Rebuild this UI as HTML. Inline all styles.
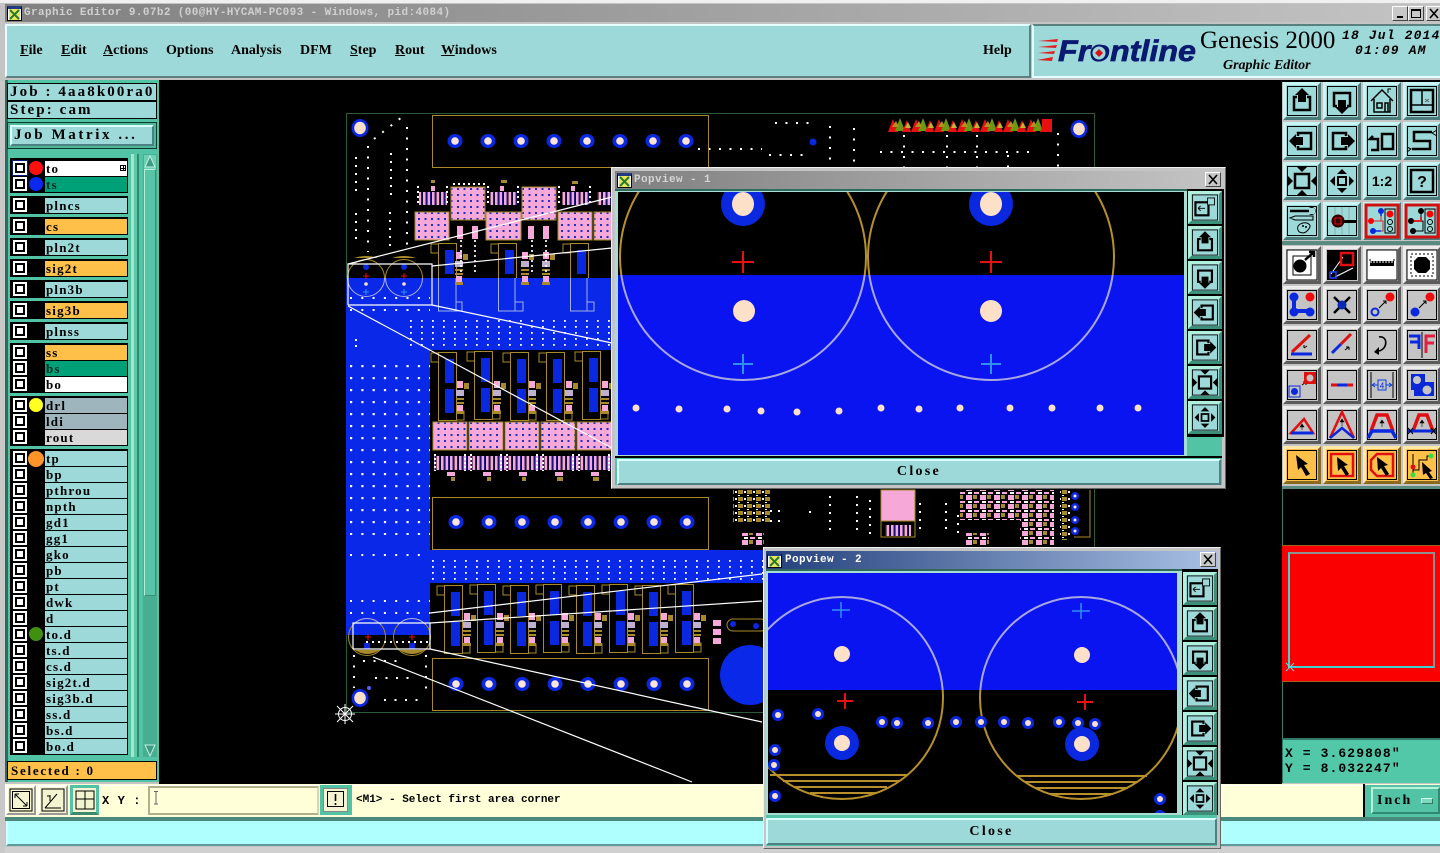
<!DOCTYPE html>
<html><head><meta charset="utf-8"><title>Graphic Editor</title>
<style>
html,body{margin:0;padding:0;background:#000;}
body{position:relative;width:1440px;height:853px;overflow:hidden;font-family:"Liberation Mono",monospace;color:#000}
div{position:absolute;box-sizing:border-box}
svg{position:absolute;display:block}
.mn{font:bold 14px/16px "Liberation Serif",serif;top:43px;white-space:nowrap}
.bk{background:#000;left:10px;width:118px}
.c{left:13px;width:14px;height:14px;background:#fff}
.c:before{content:"";position:absolute;left:2px;top:2px;width:10px;height:10px;background:#000}
.c:after{content:"";position:absolute;left:4px;top:4px;width:6px;height:6px;background:#fff}
.l{left:45px;width:82px;height:15px;font:bold 13px/15px "Liberation Serif",serif;letter-spacing:1.2px;padding-left:1px;background:#9ed9d9;white-space:pre}
.o{background:#ffc04a}.g{background:#00a078;color:#02291f}.w{background:#fff}.s{background:#9fb5bd}.y{background:#d9d9d9}
.dot{left:29px;width:14px;height:14px;border-radius:50%}
.b{width:38px;height:38px;border:3px solid;border-color:#c8f4f4 #4d7a7a #4d7a7a #c8f4f4;background:#9ed9d9}
.b svg{left:-3px;top:-3px;width:38px;height:38px}
.p svg{left:-3px;top:-3px;width:34px;height:33px}
.gy{background:#c4c4c4;border-color:#ececec #5c5c5c #5c5c5c #ececec}
.or{background:#ffc04a;border-color:#ffe8a8 #8a6a20 #8a6a20 #ffe8a8}
.p{width:34px;height:33px;border:3px solid;border-color:#b0f0dc #3a9078 #3a9078 #b0f0dc;background:#9ed9d9}
.x{width:16px;height:15px;background:#c8c8c8;border:1px solid;border-color:#fff #444 #444 #fff}
.cr{background:#f4f4d0;border:2px solid;border-color:#fff #999 #999 #fff}
.tb{background:#52c3a5;border:3px solid;border-color:#8fb0a0 #3a8a70 #3a8a70 #8fb0a0}
.cl{font:bold 14px/22px "Liberation Serif",serif;letter-spacing:2.3px;text-align:center;background:#9ed9d9;border:2px solid;border-color:#dcffff #4d8080 #4d8080 #dcffff}
</style></head><body>
<svg width="0" height="0" style="left:0;top:0">
<defs>
<symbol id="fr" viewBox="0 0 38 38"><rect x="4.5" y="4.5" width="29" height="29" fill="none" stroke="#000"/></symbol>
<symbol id="up" viewBox="0 0 38 38"><rect x="4.5" y="4.5" width="29" height="29" fill="none" stroke="#000"/><path d="M14 15H11V28H27V15H24" fill="none" stroke="#000" stroke-width="2.5"/><path d="M19 6L26 13H23V20H15V13H12Z"/></symbol>
<symbol id="dn" viewBox="0 0 38 38"><rect x="4.5" y="4.5" width="29" height="29" fill="none" stroke="#000"/><path d="M14 24H11V11H27V24H24" fill="none" stroke="#000" stroke-width="2.5"/><path d="M19 32L26 25H23V18H15V25H12Z"/></symbol>
<symbol id="lf" viewBox="0 0 38 38"><rect x="4.5" y="4.5" width="29" height="29" fill="none" stroke="#000"/><path d="M15 14V11H28V27H15V24" fill="none" stroke="#000" stroke-width="2.5"/><path d="M6 19L13 12V15H20V23H13V26Z"/></symbol>
<symbol id="rt" viewBox="0 0 38 38"><rect x="4.5" y="4.5" width="29" height="29" fill="none" stroke="#000"/><path d="M23 14V11H10V27H23V24" fill="none" stroke="#000" stroke-width="2.5"/><path d="M32 19L25 12V15H18V23H25V26Z"/></symbol>
<symbol id="fit" viewBox="0 0 38 38"><rect x="4.5" y="4.500" width="29" height="29" fill="none" stroke="#000"/><rect x="12" y="12" width="14" height="14" fill="none" stroke="#000" stroke-width="2.500"/><path d="M19 10L13 4H25ZM19 28L13 34H25ZM10 19L4 13V25ZM28 19L34 13V25Z"/></symbol>
<symbol id="zm" viewBox="0 0 38 38"><rect x="4.500" y="4.500" width="29" height="29" fill="none" stroke="#000"/><rect x="15" y="15" width="8" height="8" fill="none" stroke="#000" stroke-width="2"/><path d="M19 7L14 12H24ZM19 31L14 26H24ZM7 19L12 14V24ZM31 19L26 14V24Z"/></symbol>
<symbol id="pp" viewBox="0 0 38 38"><rect x="4.500" y="4.500" width="29" height="29" fill="none" stroke="#000"/><rect x="8" y="13" width="15" height="15" fill="none" stroke="#000" stroke-width="2.500"/><rect x="22" y="8" width="8" height="8" fill="#9ed9d9" stroke="#000"/><path d="M11 20H19M11 20L14 17M11 20L14 23" stroke="#000" fill="none"/></symbol>
</defs>
</svg>

<!-- window frame -->
<div style="left:0;top:0;width:1440px;height:853px;background:#c4c4c4"></div>
<div style="left:0;top:0;width:1440px;height:3px;background:#f0f0f0"></div>
<div style="left:5px;top:4px;width:1435px;height:18px;background:linear-gradient(90deg,#808080,#c4c4c4)"></div>
<div style="left:7px;top:6px;width:15px;height:15px;background:#fff;border:1px solid #000;border-top:3px solid #223a80"></div>
<svg style="left:9px;top:9px" width="11" height="11"><rect width="11" height="11" fill="#e8e860"/><path d="M1 1L10 10M10 1L1 10" stroke="#2a7a2a" stroke-width="2"/></svg>
<div style="left:24px;top:5px;font:bold 11px/16px 'Liberation Mono',monospace;letter-spacing:.39px;color:#d0d0d0;white-space:pre">Graphic Editor 9.07b2 (00@HY-HYCAM-PC093 - Windows, pid:4084)</div>
<div class="x" style="left:1392px;top:6px"><svg width="14" height="13"><rect x="4" y="9" width="6" height="2"/></svg></div>
<div class="x" style="left:1408px;top:6px"><svg width="14" height="13"><rect x="2.500" y="2.500" width="9" height="8" fill="none" stroke="#000"/><rect x="2" y="2" width="10" height="2"/></svg></div>
<div class="x" style="left:1426px;top:6px"><svg width="14" height="13"><path d="M3 2L11 11M11 2L3 11" stroke="#000" stroke-width="1.600"/></svg></div>

<!-- menu bar -->
<div style="left:5px;top:24px;width:1026px;height:54px;background:#9ed9d9;border:2px solid;border-color:#e4ffff #5a8080 #5a8080 #e4ffff"></div>
<div class="mn" style="left:20px"><u>F</u>ile</div>
<div class="mn" style="left:61px"><u>E</u>dit</div>
<div class="mn" style="left:103px"><u>A</u>ctions</div>
<div class="mn" style="left:166px">Options</div>
<div class="mn" style="left:231px">Analysis</div>
<div class="mn" style="left:300px">DFM</div>
<div class="mn" style="left:350px"><u>S</u>tep</div>
<div class="mn" style="left:395px"><u>R</u>out</div>
<div class="mn" style="left:441px"><u>W</u>indows</div>
<div class="mn" style="left:983px">Help</div>

<!-- logo area -->
<div style="left:1032px;top:24px;width:408px;height:54px;background:#9ed9d9;border-left:2px solid #e4ffff;border-bottom:2px solid #e4ffff;border-top:2px solid #5a8080"></div>
<svg style="left:1032px;top:24px" width="408" height="54" viewBox="1032 24 408 54">
<path d="M1038 41L1058 39L1057 42ZM1038 47L1057 45L1056 48ZM1038 53L1055 51L1054 54ZM1037 60L1053 57L1052 61Z" fill="#e02020"/>
<text x="1058" y="61" font-family="Liberation Sans" font-weight="bold" font-style="italic" font-size="30" fill="#0a1a70" stroke="#0a1a70" stroke-width=".7" textLength="138" lengthAdjust="spacingAndGlyphs">Frontline</text>
<circle cx="1099" cy="53" r="7.500" fill="#9ed9d9" stroke="#0a1a70" stroke-width="2"/><path d="M1099 49L1103 53L1099 57L1095 53Z" fill="#e01010"/>
</svg>
<div style="left:1200px;top:26px;font:25px/30px 'Liberation Serif',serif;white-space:nowrap">Genesis 2000</div>
<div style="left:1223px;top:57px;font:italic bold 14px/18px 'Liberation Serif',serif;white-space:nowrap">Graphic Editor</div>
<div style="left:1342px;top:28px;font:italic bold 13px/16px 'Liberation Mono',monospace;letter-spacing:1.150px;white-space:pre">18 Jul 2014</div>
<div style="left:1355px;top:43px;font:italic bold 13px/16px 'Liberation Mono',monospace;letter-spacing:1.150px;white-space:pre">01:09 AM</div>

<!-- canvas -->
<div style="left:159px;top:80px;width:1123px;height:705px;background:#000"></div>
<svg style="left:159px;top:80px" width="1123" height="705" viewBox="159 80 1123 705">
<defs>
<pattern id="d1" x="350" y="365" width="11.300" height="12" patternUnits="userSpaceOnUse"><rect width="2.200" height="2.200" fill="#fff"/></pattern>
<pattern id="d2" x="432" y="560" width="11" height="6" patternUnits="userSpaceOnUse"><rect width="1.800" height="1.800" fill="#fff"/></pattern>
<pattern id="pk" width="6.500" height="6" patternUnits="userSpaceOnUse"><rect width="6.500" height="6" fill="#f6a8d8"/><rect x="2" y="2" width="2" height="2" fill="#2030c0"/></pattern>
<pattern id="sp" width="4.500" height="10" patternUnits="userSpaceOnUse"><rect width="2.600" height="10" fill="#f6a8d8"/><rect x="2.600" width="1.200" height="10" fill="#1a1a90"/></pattern>
<pattern id="mx" width="14" height="9" patternUnits="userSpaceOnUse"><rect width="6" height="5" fill="#f6a8d8"/><rect x="7" width="4" height="4" fill="#a88a2a"/><rect x="2" y="6" width="4" height="2" fill="#fff"/><rect x="8" y="6" width="5" height="2" fill="#f6a8d8"/></pattern>
<pattern id="mt" width="9" height="7" patternUnits="userSpaceOnUse"><rect width="5" height="4" fill="#a88a2a"/><rect y="5" width="2" height="1" fill="#fff"/><rect x="6" y="1" width="2" height="2" fill="#fff"/></pattern>
<pattern id="rs" x="888" y="118" width="23" height="14" patternUnits="userSpaceOnUse"><path d="M0 14L5 1L10 14Z" fill="#e81010"/><path d="M7 13L12 0L17 13Z" fill="#6a9a10"/><path d="M14 14L19 2L23 14Z" fill="#e81010"/><path d="M4 9L8 3L11 9Z" fill="#b09020"/><path d="M17 10L20 4L23 10Z" fill="#c8b030"/></pattern>
<g id="pad"><ellipse rx="7.500" ry="7" fill="#0a28e0"/><circle r="3.800" fill="#fde4d8"/></g>
<g id="pbig"><ellipse rx="8.500" ry="9" fill="#0a28e0"/><ellipse rx="5.800" ry="6.200" fill="#fde0c8"/></g>
<g id="pads"><use href="#pad" x="0"/><use href="#pad" x="33"/><use href="#pad" x="66"/><use href="#pad" x="99"/><use href="#pad" x="132"/><use href="#pad" x="165"/><use href="#pad" x="198"/><use href="#pad" x="231"/></g>
<g id="t"><rect x=".5" y=".5" width="18" height="68" fill="none" stroke="#a88a2a"/><path d="M0 1H-7V10H0M19 59H26V68H19" fill="none" stroke="#a88a2a"/><rect x="7" y="7" width="9" height="24" fill="#0a28e0"/><rect x="7" y="37" width="9" height="24" fill="#0a28e0"/></g>
<g id="k"><rect x="-3" y="0" width="6" height="7" fill="#f6a8d8"/><rect x="-4" y="9" width="8" height="6" fill="#c0b0d0"/><rect x="-4" y="17" width="8" height="2" fill="#a88a2a"/><rect x="-4" y="21" width="8" height="2" fill="#a88a2a"/><rect x="-3" y="24" width="6" height="6" fill="#f6a8d8"/><rect x="-4" y="30" width="8" height="3" fill="#a88a2a"/><rect x="4" y="2" width="5" height="6" fill="#a88a2a"/></g>
<clipPath id="bl"><rect x="340" y="278" width="300" height="80"/></clipPath>
<clipPath id="ab"><rect x="340" y="100" width="300" height="178"/></clipPath>
<clipPath id="bb"><rect x="340" y="625" width="100" height="40"/></clipPath>
<clipPath id="ba"><rect x="340" y="600" width="100" height="25"/></clipPath>
</defs>
<rect x="346.500" y="113.500" width="748" height="599" fill="none" stroke="#2a5a3a"/>
<path d="M346 278H620V350H430V550H770V583H430V635H346Z" fill="#0a28e8"/>
<circle cx="750" cy="675" r="30" fill="#0a28e8"/>

<!-- dot fields -->
<rect x="350" y="365" width="80" height="170" fill="url(#d1)"/>
<rect x="432" y="560" width="340" height="20" fill="url(#d2)"/>
<rect x="410" y="320" width="205" height="28" fill="url(#d2)"/>
<path d="M350 298H430M350 310H430M350 601H430M350 613H430M350 555H425M355 340H365M355 346H365" stroke="#fff" stroke-width="2" stroke-dasharray="2 9.300"/>
<g stroke="#fff" stroke-width="2" stroke-dasharray="2 6" fill="none">
<path d="M356 157V197M356 213V245M391 153V196M390 212V250"/>
</g>
<g stroke="#fff" stroke-width="2" stroke-dasharray="2 8.500" fill="none">
<path d="M368 146V252M407 127V245M374 139L402 117M775 123H812M769 155H806M769 172H808M830 126V172M854 128V167M904 135V167M947 135V167M977 135V167M1008 155V167M1058 133V167M880 152H1030"/>
<path d="M354 655V688M363 661H405M375 678H417M384 700H425M426 655V697M698 149H762"/>
</g>
<use href="#pbig" x="360" y="128"/>
<use href="#pbig" x="360" y="698"/>
<use href="#pbig" x="1079" y="129"/>
<circle cx="813" cy="142" r="3.500" fill="#0a28e0"/>
<circle cx="369" cy="688" r="2" fill="#5060ff"/>

<!-- top section -->
<rect x="432.500" y="115.500" width="276" height="52" fill="none" stroke="#a88a2a"/>
<use href="#pads" x="455" y="141"/>
<rect x="432.500" y="497.500" width="276" height="52" fill="none" stroke="#a88a2a"/>
<use href="#pads" x="456" y="522"/>
<rect x="432.500" y="658.500" width="276" height="52" fill="none" stroke="#a88a2a"/>
<use href="#pads" x="456" y="684"/>

<!-- pink pads upper -->
<g stroke="#a88a2a"><rect x="415" y="212" width="34" height="28" fill="url(#pk)"/><rect x="451" y="187" width="34" height="33" fill="url(#pk)"/><rect x="486" y="212" width="35" height="28" fill="url(#pk)"/><rect x="522" y="187" width="34" height="33" fill="url(#pk)"/><rect x="558" y="212" width="34" height="28" fill="url(#pk)"/><rect x="594" y="212" width="30" height="28" fill="url(#pk)"/></g>
<rect x="419" y="192" width="28" height="13" fill="url(#sp)"/><rect x="490" y="192" width="27" height="13" fill="url(#sp)"/><rect x="562" y="192" width="27" height="13" fill="url(#sp)"/><rect x="597" y="192" width="20" height="13" fill="url(#sp)"/>
<path d="M418 186V204M447 186V204M453 184H486M488 186V204M518 186V204M559 186V204M590 186V204" stroke="#fff" stroke-width="2" stroke-dasharray="2 3"/>
<g fill="#f6a8d8"><rect x="457" y="226" width="6" height="13"/><rect x="472" y="226" width="6" height="13"/><rect x="528" y="226" width="6" height="13"/><rect x="543" y="226" width="6" height="13"/><rect x="431" y="186" width="4" height="5"/><rect x="500" y="186" width="4" height="5"/><rect x="571" y="186" width="4" height="5"/></g>
<g fill="#a88a2a"><rect x="431" y="180" width="4" height="3"/><rect x="501" y="180" width="6" height="3"/><rect x="572" y="181" width="6" height="3"/></g>
<!-- tan rects upper row -->
<g clip-path="url(#ab)"><use href="#t" x="438" y="243"/><use href="#t" x="498" y="243"/><use href="#t" x="570" y="243"/></g>
<g clip-path="url(#bl)"><path d="M438.500 278V311H456V278M456 302H462V311H456M498.500 278V311H515V278M515 302H523V311H515M570.500 278V311H587V278M587 302H594V311H587" fill="none" stroke="#a0b0e8"/></g>
<use href="#k" x="459" y="252"/><use href="#k" x="525" y="252"/><use href="#k" x="546" y="252"/>
<path d="M461 240V275M475 240V272M532 240V275M546 240V272" stroke="#fff" stroke-width="2" stroke-dasharray="2 3" opacity=".85"/>

<!-- capacitors top -->
<circle cx="366" cy="278" r="18.500" fill="none" stroke="#b0b0e0" clip-path="url(#bl)"/><circle cx="404" cy="278" r="18.500" fill="none" stroke="#b0b0e0" clip-path="url(#bl)"/>
<circle cx="366" cy="278" r="18.500" fill="none" stroke="#a88a2a" clip-path="url(#ab)"/><circle cx="404" cy="278" r="18.500" fill="none" stroke="#a88a2a" clip-path="url(#ab)"/>
<path d="M354 258Q366 254 378 258ZM392 258Q404 254 416 258Z" fill="#a88a2a"/>
<circle cx="366" cy="267" r="3" fill="#0a28e0"/><circle cx="404" cy="267" r="3" fill="#0a28e0"/>
<path d="M363 276H369M366 273V279M401 276H407M404 273V279" stroke="#e01010"/>
<circle cx="366" cy="284" r="1.800" fill="#fde4d8"/><circle cx="404" cy="284" r="1.800" fill="#fde4d8"/>
<path d="M363 292H369M366 289V295M401 292H407M404 289V295" stroke="#3090f0"/>

<!-- middle groups -->
<rect x="430" y="350" width="190" height="145" fill="#000"/>
<use href="#t" x="438" y="352"/><use href="#t" x="474" y="351"/><use href="#t" x="510" y="352"/><use href="#t" x="546" y="352"/><use href="#t" x="582" y="351"/>
<use href="#k" x="460" y="381"/><use href="#k" x="497" y="381"/><use href="#k" x="532" y="381"/><use href="#k" x="569" y="381"/><use href="#k" x="605" y="381"/>
<g stroke="#a88a2a"><rect x="433" y="422" width="34" height="28" fill="url(#pk)"/><rect x="469" y="422" width="34" height="28" fill="url(#pk)"/><rect x="505" y="422" width="34" height="28" fill="url(#pk)"/><rect x="541" y="422" width="34" height="28" fill="url(#pk)"/><rect x="577" y="422" width="36" height="28" fill="url(#pk)"/></g>
<rect x="434" y="456" width="178" height="14" fill="url(#sp)"/>
<path d="M435 454V471M465 454V471M471 454V471M501 454V471M507 454V471M537 454V471M543 454V471M573 454V471M579 454V471M609 454V471" stroke="#fff" stroke-width="2" stroke-dasharray="2 2"/>
<g fill="#a88a2a"><rect x="451" y="477" width="4" height="4"/><rect x="487" y="477" width="4" height="4"/><rect x="522" y="477" width="4" height="4"/><rect x="557" y="477" width="6" height="4"/><rect x="593" y="477" width="6" height="4"/></g>
<g fill="#f6a8d8"><rect x="447" y="472" width="8" height="4"/><rect x="483" y="472" width="8" height="4"/><rect x="519" y="472" width="8" height="4"/><rect x="555" y="472" width="8" height="4"/><rect x="591" y="472" width="8" height="4"/></g>

<!-- bottom groups -->
<use href="#t" x="444" y="585"/><use href="#t" x="477" y="584"/><use href="#t" x="510" y="585"/><use href="#t" x="543" y="584"/><use href="#t" x="576" y="585"/><use href="#t" x="609" y="584"/><use href="#t" x="642" y="585"/><use href="#t" x="675" y="584"/>
<use href="#k" x="467" y="613"/><use href="#k" x="500" y="613"/><use href="#k" x="532" y="613"/><use href="#k" x="565" y="613"/><use href="#k" x="598" y="613"/><use href="#k" x="631" y="613"/><use href="#k" x="664" y="613"/><use href="#k" x="697" y="613"/>
<rect x="713" y="620" width="8" height="6" fill="#f6a8d8"/><rect x="713" y="629" width="8" height="6" fill="#f6a8d8"/><rect x="713" y="638" width="8" height="6" fill="#f6a8d8"/>
<rect x="727" y="619" width="40" height="12" rx="6" fill="none" stroke="#a88a2a"/><circle cx="733" cy="624" r="3" fill="#0a28e0"/><circle cx="756" cy="626" r="3" fill="#0a28e0"/>
<circle cx="367" cy="637" r="18.500" fill="none" stroke="#b0b0e0" clip-path="url(#ba)"/><circle cx="412" cy="637" r="18.500" fill="none" stroke="#b0b0e0" clip-path="url(#ba)"/>
<circle cx="367" cy="637" r="18.500" fill="none" stroke="#a88a2a" clip-path="url(#bb)"/><circle cx="412" cy="637" r="18.500" fill="none" stroke="#a88a2a" clip-path="url(#bb)"/>
<path d="M355 650Q367 658 380 650ZM399 650Q412 658 425 650Z" fill="#a88a2a"/>
<rect x="364" y="643" width="6" height="6" fill="#0a28e0"/><rect x="409" y="643" width="6" height="6" fill="#0a28e0"/>
<path d="M365 637H371M368 634V640M409 637H415M412 634V640" stroke="#e01010"/>
<path d="M366 642H430" stroke="#fff" stroke-width="2" stroke-dasharray="2 4"/>

<!-- top-right strip -->
<rect x="888" y="118" width="164" height="14" fill="url(#rs)"/>
<rect x="1042" y="119" width="10" height="12" fill="#e81010"/>

<!-- between popups -->
<rect x="733" y="490" width="37" height="32" fill="url(#mt)"/>
<rect x="742" y="533" width="22" height="13" fill="url(#mx)"/>
<path d="M770 511H782M770 521H782M830 496V535M857 496V535M870 500V535M920 503V535M946 503V535M958 515V535M809 512H812" stroke="#fff" stroke-width="2" stroke-dasharray="2 6"/>
<rect x="881" y="490" width="34" height="31" fill="#f6a8d8" stroke="#a88a2a"/>
<rect x="881" y="521" width="34" height="16" fill="none" stroke="#a88a2a"/>
<rect x="885" y="525" width="26" height="11" fill="url(#sp)"/>
<rect x="960" y="490" width="94" height="30" fill="url(#mx)"/>
<rect x="1020" y="520" width="34" height="25" fill="url(#mx)"/>
<rect x="965" y="533" width="24" height="12" fill="url(#mx)"/>
<rect x="1060" y="490" width="10" height="50" fill="url(#mt)"/>
<path d="M1090 490V537H1074" fill="none" stroke="#a88a2a"/>
<circle cx="1075" cy="496" r="4" fill="#0a28e0"/><circle cx="1075" cy="507" r="4" fill="#0a28e0"/><circle cx="1075" cy="520" r="4" fill="#0a28e0"/><circle cx="1075" cy="531" r="4" fill="#0a28e0"/>
<circle cx="1075" cy="496" r="1.500" fill="#fde4d8"/><circle cx="1075" cy="507" r="1.500" fill="#fde4d8"/><circle cx="1075" cy="520" r="1.500" fill="#fde4d8"/><circle cx="1075" cy="531" r="1.500" fill="#fde4d8"/>

<!-- zoom window lines -->
<g fill="none" stroke="#fff" stroke-width="1.200">
<path d="M348 305V264H432V305H348"/>
<path d="M348 264L612 197M432 266L612 248M432 305L612 343M348 306L612 448"/>
<path d="M353 649V623H430V649H353"/>
<path d="M430 613L762 574M430 623L762 601M430 649L762 722M373 657L692 782"/>
</g>
<!-- origin -->
<g stroke="#fff" fill="none"><circle cx="345" cy="714" r="6.500"/><path d="M337 706L353 722M353 706L337 722M345 704V724M335 714H355"/></g>
</svg>

<!-- left panel -->
<div style="left:5px;top:80px;width:154px;height:702px;background:#52c3a5;border-left:3px solid #2f6a5c"></div>
<div style="left:7px;top:83px;width:150px;height:18px;background:#9ed9d9;border:1px solid #000;font:bold 15px/17px 'Liberation Serif',serif;letter-spacing:2.100px;padding-left:2px;white-space:pre">Job : 4aa8k00ra0</div>
<div style="left:7px;top:101px;width:150px;height:18px;background:#9ed9d9;border:1px solid #000;font:bold 15px/17px 'Liberation Serif',serif;letter-spacing:2.100px;padding-left:2px;white-space:pre">Step: cam</div>
<div style="left:7px;top:122px;width:150px;height:27px;background:#4fb898;border:1px solid #0a3a30"></div>
<div style="left:10px;top:125px;width:144px;height:21px;background:#9ed9d9;border:2px solid;border-color:#dcffff #4d8080 #4d8080 #dcffff;font:bold 15px/17px 'Liberation Serif',serif;letter-spacing:2.600px;padding-left:2px;white-space:pre">Job Matrix ...</div>

<div class="bk" style="top:158px;height:35px"></div>
<div class="bk" style="top:196px;height:18px"></div>
<div class="bk" style="top:217px;height:18px"></div>
<div class="bk" style="top:238px;height:18px"></div>
<div class="bk" style="top:259px;height:18px"></div>
<div class="bk" style="top:280px;height:18px"></div>
<div class="bk" style="top:301px;height:18px"></div>
<div class="bk" style="top:322px;height:18px"></div>
<div class="bk" style="top:343px;height:50px"></div>
<div class="bk" style="top:396px;height:50px"></div>
<div class="bk" style="top:449px;height:306px"></div>
<div style="left:12px;top:160px;width:16px;height:16px;background:#0a1a78"></div>
<div class="c" style="top:161px"></div><div class="c" style="top:177px"></div><div class="c" style="top:198px"></div><div class="c" style="top:219px"></div><div class="c" style="top:240px"></div><div class="c" style="top:261px"></div><div class="c" style="top:282px"></div><div class="c" style="top:303px"></div><div class="c" style="top:324px"></div><div class="c" style="top:345px"></div><div class="c" style="top:361px"></div><div class="c" style="top:377px"></div><div class="c" style="top:398px"></div><div class="c" style="top:414px"></div><div class="c" style="top:430px"></div><div class="c" style="top:451px"></div><div class="c" style="top:467px"></div><div class="c" style="top:483px"></div><div class="c" style="top:499px"></div><div class="c" style="top:515px"></div><div class="c" style="top:531px"></div><div class="c" style="top:547px"></div><div class="c" style="top:563px"></div><div class="c" style="top:579px"></div><div class="c" style="top:595px"></div><div class="c" style="top:611px"></div><div class="c" style="top:627px"></div><div class="c" style="top:643px"></div><div class="c" style="top:659px"></div><div class="c" style="top:675px"></div><div class="c" style="top:691px"></div><div class="c" style="top:707px"></div><div class="c" style="top:723px"></div><div class="c" style="top:739px"></div>
<div class="dot" style="top:161px;background:#ff1010"></div>
<div class="dot" style="top:177px;background:#0a28f0"></div>
<div class="dot" style="top:398px;background:#ffff20"></div>
<div class="dot" style="top:451px;background:#ff9428;left:28px;width:16px;height:16px"></div>
<div class="dot" style="top:627px;background:#3f9010"></div>
<div class="l w" style="top:161px">to</div><div style="left:120px;top:165px;width:6px;height:6px;border:1px solid #000;background:linear-gradient(#000,#000) center/100% 1px no-repeat,linear-gradient(#000,#000) center/1px 100% no-repeat,#fff"></div>
<div class="l g" style="top:177px">ts</div>
<div class="l" style="top:198px">plncs</div>
<div class="l o" style="top:219px">cs</div>
<div class="l" style="top:240px">pln2t</div>
<div class="l o" style="top:261px">sig2t</div>
<div class="l" style="top:282px">pln3b</div>
<div class="l o" style="top:303px">sig3b</div>
<div class="l" style="top:324px">plnss</div>
<div class="l o" style="top:345px">ss</div>
<div class="l g" style="top:361px">bs</div>
<div class="l w" style="top:377px">bo</div>
<div class="l s" style="top:398px">drl</div>
<div class="l s" style="top:414px">ldi</div>
<div class="l y" style="top:430px">rout</div>
<div class="l" style="top:451px">tp</div>
<div class="l" style="top:467px">bp</div>
<div class="l" style="top:483px">pthrou</div>
<div class="l" style="top:499px">npth</div>
<div class="l" style="top:515px">gd1</div>
<div class="l" style="top:531px">gg1</div>
<div class="l" style="top:547px">gko</div>
<div class="l" style="top:563px">pb</div>
<div class="l" style="top:579px">pt</div>
<div class="l" style="top:595px">dwk</div>
<div class="l" style="top:611px">d</div>
<div class="l" style="top:627px">to.d</div>
<div class="l" style="top:643px">ts.d</div>
<div class="l" style="top:659px">cs.d</div>
<div class="l" style="top:675px">sig2t.d</div>
<div class="l" style="top:691px">sig3b.d</div>
<div class="l" style="top:707px">ss.d</div>
<div class="l" style="top:723px">bs.d</div>
<div class="l" style="top:739px">bo.d</div>

<!-- scroll gutter -->
<div style="left:131px;top:154px;width:3px;height:603px;background:#a8e4cc"></div>
<div style="left:134px;top:154px;width:3px;height:603px;background:#5ec8aa"></div>
<div style="left:137px;top:154px;width:2px;height:603px;background:#2f8a70"></div>
<div style="left:143px;top:154px;width:14px;height:603px;background:#48ae92"></div>
<div style="left:144px;top:155px;width:12px;height:14px;background:#6dd0b5"></div>
<svg style="left:144px;top:155px" width="12" height="14"><path d="M6 1L11 12H1Z" fill="#3f9a82" stroke="#c0f0e0"/></svg>
<div style="left:144px;top:169px;width:12px;height:427px;background:#58c4a6;border:1px solid;border-color:#b8ecd8 #3a9078 #3a9078 #b8ecd8"></div>
<svg style="left:144px;top:744px" width="12" height="13"><path d="M6 12L11 1H1Z" fill="#3f9a82" stroke="#c0f0e0"/></svg>

<div style="left:7px;top:761px;width:150px;height:19px;background:#ffc04a;border:1px solid #000;font:bold 13px/18px 'Liberation Serif',serif;letter-spacing:1.750px;padding-left:3px;white-space:pre">Selected : 0</div>

<!-- bottom command bar -->
<div style="left:5px;top:784px;width:1435px;height:33px;background:#ffffd8"></div>
<div style="left:5px;top:785px;width:1358px;height:1px;background:#fff"></div>
<div class="cr" style="left:6px;top:785px;width:30px;height:30px"><svg width="26" height="26" style="left:0;top:0"><rect x="4.500" y="4.500" width="17" height="17" fill="none" stroke="#000"/><rect x="2" y="2" width="22" height="22" fill="none" stroke="#000"/><path d="M7 7L19 19M7 7V11M7 7H11M19 19V15M19 19H15" stroke="#000" fill="none"/></svg></div>
<div class="cr" style="left:38px;top:785px;width:30px;height:30px"><svg width="26" height="26" style="left:0;top:0"><rect x="2" y="2" width="22" height="22" fill="none" stroke="#000"/><path d="M5 21L17 7M5 21H21M10 8V14M7 9H10" stroke="#000" fill="none"/></svg></div>
<div class="tb" style="left:70px;top:785px;width:29px;height:30px;background:#f4f4d0;border-color:#52c3a5 #52c3a5 #3a8a70 #52c3a5"><svg width="24" height="24" style="left:0;top:0"><rect x="3" y="3" width="18" height="18" fill="none" stroke="#000"/><path d="M3 11H21M12 3V21" stroke="#000"/></svg></div>
<div style="left:102px;top:793px;font:bold 12px/16px 'Liberation Mono',monospace;letter-spacing:.6px;white-space:pre">X Y :</div>
<div style="left:148px;top:786px;width:171px;height:29px;background:#ffffd8;border:2px solid;border-color:#b0b08a #d8d8b0 #b0b08a #b0b08a"></div>
<svg style="left:153px;top:791px" width="6" height="14"><path d="M1 .5H5M3 .5V13M1 13H5" stroke="#666" fill="none"/></svg>
<div style="left:320px;top:785px;width:32px;height:30px;background:#52c3a5"></div>
<div style="left:323px;top:788px;width:25px;height:24px;background:#f4f4d0;border:1px solid #888"></div>
<svg style="left:327px;top:791px" width="17" height="17"><rect x=".5" y=".5" width="16" height="15" fill="none" stroke="#000"/><path d="M8.500 3V10M8.500 12V14" stroke="#000" stroke-width="1.600"/></svg>
<div style="left:356px;top:792px;font:bold 11px/16px 'Liberation Mono',monospace;white-space:pre">&lt;M1&gt; - Select first area corner</div>
<div style="left:1363px;top:784px;width:2px;height:33px;background:#000"></div>
<div style="left:1365px;top:785px;width:75px;height:32px;background:#52c3a5"></div>
<div style="left:1371px;top:787px;width:69px;height:27px;background:#52c3a5;border:2px solid;border-color:#b8f0dc #2f8a70 #2f8a70 #b8f0dc;font:bold 14px/24px 'Liberation Serif',serif;letter-spacing:2px;padding-left:4px">Inch</div>
<div style="left:1421px;top:798px;width:12px;height:6px;background:#7fd8c0;border:1px solid;border-color:#d0fff0 #2f7a60 #2f7a60 #d0fff0"></div>

<!-- status bar -->
<div style="left:5px;top:817px;width:1435px;height:4px;background:#4a8a7c"></div>
<div style="left:6px;top:821px;width:1434px;height:25px;background:#b0ffff;border-bottom:2px solid #5f9a9a;border-left:2px solid #d8ffff"></div>
<div style="left:0;top:847px;width:1440px;height:6px;background:#d0d0d0"></div>
<div style="left:0;top:82px;width:5px;height:771px;background:#c8c8c8"></div>

<!-- right toolbar backing -->
<div style="left:1281px;top:80px;width:159px;height:2px;background:#000"></div>
<div style="left:1282px;top:241px;width:158px;height:4px;background:#5a8a80"></div>
<div style="left:1282px;top:486px;width:158px;height:3px;background:#5a8a80"></div>

<div class="b" style="left:1283px;top:82px"><svg viewBox="0 0 38 38"><use href="#up"/></svg></div>
<div class="b" style="left:1323px;top:82px"><svg viewBox="0 0 38 38"><use href="#dn"/></svg></div>
<div class="b" style="left:1363px;top:82px"><svg viewBox="0 0 38 38"><use href="#fr"/><path d="M8 19L19 8L30 19M11 17V30H27V17M14 21H19V26H14ZM22 21H25V30H22Z" fill="none" stroke="#000" stroke-width="1.500"/><path d="M25 11V7h3" stroke="#000" fill="none"/></svg></div>
<div class="b" style="left:1403px;top:82px"><svg viewBox="0 0 38 38"><use href="#fr"/><rect x="8" y="8" width="22" height="22" fill="none" stroke="#000" stroke-width="2.500"/><path d="M8 23H30M19 8V23" stroke="#000" stroke-width="1.500"/><path d="M22 17L26 20M26 17L22 20" stroke="#666"/></svg></div>

<div class="b" style="left:1283px;top:122px"><svg viewBox="0 0 38 38"><use href="#lf"/></svg></div>
<div class="b" style="left:1323px;top:122px"><svg viewBox="0 0 38 38"><use href="#rt"/></svg></div>
<div class="b" style="left:1363px;top:122px"><svg viewBox="0 0 38 38"><use href="#fr"/><path d="M10 14L7 17H15V28H8" fill="none" stroke="#000" stroke-width="2.500"/><rect x="19" y="12" width="11" height="15" fill="none" stroke="#000" stroke-width="2.500"/></svg></div>
<div class="b" style="left:1403px;top:122px"><svg viewBox="0 0 38 38"><use href="#fr"/><path d="M29 10H11V19H27V27H9" fill="none" stroke="#000" stroke-width="2.500"/><path d="M34 8L29 11L34 14M4 25L8 27L4 30" fill="none" stroke="#000"/></svg></div>

<div class="b" style="left:1283px;top:162px"><svg viewBox="0 0 38 38"><use href="#fit"/></svg></div>
<div class="b" style="left:1323px;top:162px"><svg viewBox="0 0 38 38"><use href="#zm"/></svg></div>
<div class="b" style="left:1363px;top:162px"><svg viewBox="0 0 38 38"><use href="#fr"/><text x="19" y="24" text-anchor="middle" font-family="Liberation Sans" font-weight="bold" font-size="14">1:2</text></svg></div>
<div class="b" style="left:1403px;top:162px"><svg viewBox="0 0 38 38"><use href="#fr"/><rect x="8" y="8" width="22" height="22" fill="none" stroke="#000" stroke-width="2.500"/><text x="19" y="25" text-anchor="middle" font-family="Liberation Sans" font-weight="bold" font-size="16">?</text></svg></div>

<div class="b" style="left:1283px;top:202px"><svg viewBox="0 0 38 38"><use href="#fr"/><path d="M7 9H26" stroke="#000" stroke-width="2.500"/><path d="M26 6A4 4 0 1 1 26 12L32 12V6Z"/><path d="M7 16L12 14H30V18H12Z" fill="none" stroke="#000"/><path d="M15 28C13 23 19 20 24 21C29 23 27 26 24 29C21 32 16 31 15 28Z" fill="none" stroke="#000"/><circle cx="20" cy="24" r="1"/><circle cx="23" cy="25" r="1"/></svg></div>
<div class="b" style="left:1323px;top:202px"><svg viewBox="0 0 38 38"><use href="#fr"/><path d="M5 19H33M19 5V33M12 5V33M26 5V33" stroke="#8aa" /><path d="M20 18H33V21H20Z"/><circle cx="15" cy="19" r="6.500" fill="#300"/><rect x="12" y="16" width="6" height="6" fill="none" stroke="#e01010"/></svg></div>
<div class="b" style="left:1363px;top:202px"><svg viewBox="0 0 38 38"><rect x="3" y="3" width="32" height="32" fill="none" stroke="#d01010" stroke-width="3"/><rect x="22" y="7" width="10" height="24" fill="none" stroke="#000"/><circle cx="27" cy="12" r="3.500" fill="#f00"/><circle cx="27" cy="20" r="2.500" fill="none" stroke="#000"/><circle cx="27" cy="27" r="2.500" fill="none" stroke="#000"/><path d="M9 19H20V29H10M18 8V19" fill="none" stroke="#e02020"/><path d="M18 8V14M10 29H18" stroke="#0a28e0" stroke-width="1.500"/><circle cx="8" cy="19" r="3" fill="#f00"/><circle cx="18" cy="9" r="3" fill="#0a28e0"/><circle cx="10" cy="29" r="3" fill="#0a28e0"/></svg></div>
<div class="b" style="left:1403px;top:202px"><svg viewBox="0 0 38 38"><rect x="3" y="3" width="32" height="32" fill="none" stroke="#d01010" stroke-width="3"/><rect x="22" y="7" width="10" height="24" fill="none" stroke="#000"/><circle cx="27" cy="12" r="3.500" fill="#f00"/><circle cx="27" cy="20" r="2.500" fill="none" stroke="#000"/><circle cx="27" cy="27" r="2.500" fill="none" stroke="#000"/><path d="M9 19H20V29H10M18 8V19" fill="none" stroke="#000"/><path d="M11 19H18V15" fill="none" stroke="#e02020" stroke-width="2"/><circle cx="8" cy="19" r="3"/><circle cx="18" cy="9" r="3"/><circle cx="10" cy="29" r="3"/></svg></div>

<div class="b gy" style="left:1283px;top:246px"><svg viewBox="0 0 38 38"><rect x="4" y="4" width="30" height="30" fill="#fff" stroke="#000"/><rect x="10" y="10" width="18" height="19" fill="none" stroke="#000"/><circle cx="17" cy="20" r="6.500"/><path d="M22 14L31 6M26 6H31V11" stroke="#000" stroke-width="2.500" fill="none"/></svg></div>
<div class="b gy" style="left:1323px;top:246px"><svg viewBox="0 0 38 38"><rect x="4" y="4" width="30" height="30" fill="#000"/><path d="M20 11L8 28M30 22L12 31" stroke="#fff"/><rect x="18" y="7" width="12" height="12" fill="none" stroke="#e01010" stroke-width="2.500"/><rect x="7" y="26" width="6" height="6" fill="none" stroke="#2040ff" stroke-width="1.500"/></svg></div>
<div class="b gy" style="left:1363px;top:246px"><svg viewBox="0 0 38 38"><rect x="4" y="4" width="30" height="30" fill="#fff" stroke="#000"/><rect x="7" y="15" width="24" height="5"/><path d="M8 14V17M11 14V17M14 14V17M17 14V17M20 14V17M23 14V17M26 14V17M29 14V17" stroke="#fff"/><path d="M7 13V15M31 13V15" stroke="#000"/></svg></div>
<div class="b gy" style="left:1403px;top:246px"><svg viewBox="0 0 38 38"><rect x="4" y="4" width="30" height="30" fill="#fff" stroke="#000"/><rect x="8" y="8" width="22" height="22" fill="none" stroke="#000" stroke-dasharray="2 2"/><path d="M15 11H23L27 15V23L23 27H15L11 23V15Z"/></svg></div>

<div class="b gy" style="left:1283px;top:286px"><svg viewBox="0 0 38 38"><use href="#fr"/><path d="M11 11V25H27" stroke="#0a28e0" stroke-width="4" fill="none"/><circle cx="11" cy="11" r="4.500" fill="#0a28e0"/><circle cx="11" cy="26" r="4.500" fill="#0a28e0"/><circle cx="27" cy="26" r="4.500" fill="#0a28e0"/><circle cx="27" cy="11" r="4.500" fill="#f00c0c"/></svg></div>
<div class="b gy" style="left:1323px;top:286px"><svg viewBox="0 0 38 38"><use href="#fr"/><path d="M11 11L27 27M27 11L11 27" stroke="#000" stroke-width="2.500"/><circle cx="19" cy="19" r="4.500" fill="#0a28b0"/></svg></div>
<div class="b gy" style="left:1363px;top:286px"><svg viewBox="0 0 38 38"><use href="#fr"/><circle cx="12" cy="26" r="3.500" fill="none" stroke="#0a28e0" stroke-width="2"/><path d="M16 22L23 15M20 15H23V18" stroke="#000" fill="none"/><circle cx="27" cy="11" r="4.500" fill="#f00c0c"/></svg></div>
<div class="b gy" style="left:1403px;top:286px"><svg viewBox="0 0 38 38"><use href="#fr"/><circle cx="12" cy="26" r="4.500" fill="#0a28e0"/><path d="M16 22L23 15M20 15H23V18" stroke="#000" fill="none"/><circle cx="27" cy="11" r="4.500" fill="#f00c0c"/></svg></div>

<div class="b gy" style="left:1283px;top:326px"><svg viewBox="0 0 38 38"><use href="#fr"/><path d="M9 26L27 9" stroke="#e01010" stroke-width="3"/><path d="M8 28H29" stroke="#0a28e0" stroke-width="3"/><path d="M21 22L24 20M21 22V19" stroke="#000" fill="none"/></svg></div>
<div class="b gy" style="left:1323px;top:326px"><svg viewBox="0 0 38 38"><use href="#fr"/><path d="M18 18L28 8" stroke="#e01010" stroke-width="3"/><path d="M9 27L18 18" stroke="#0a28e0" stroke-width="3"/><path d="M22 24L26 21M26 21H23M26 21V24" stroke="#000" fill="none"/></svg></div>
<div class="b gy" style="left:1363px;top:326px"><svg viewBox="0 0 38 38"><use href="#fr"/><path d="M16 11C24 9 26 22 16 25" fill="none" stroke="#000" stroke-width="1.600"/><path d="M11 26L16 21V29Z"/></svg></div>
<div class="b gy" style="left:1403px;top:326px"><svg viewBox="0 0 38 38"><use href="#fr"/><path d="M6 10H16V23M7 16H16" stroke="#0a28e0" stroke-width="3" fill="none"/><path d="M19 6V32" stroke="#000"/><path d="M32 10H23V27M23 17H31" stroke="#e02040" stroke-width="3" fill="none"/></svg></div>

<div class="b gy" style="left:1283px;top:366px"><svg viewBox="0 0 38 38"><use href="#fr"/><rect x="6" y="20" width="11" height="11" fill="none" stroke="#0a28e0"/><circle cx="11.500" cy="25.500" r="3.500" fill="#0a28e0"/><path d="M19 19L23 16M23 16H20M23 16V19" stroke="#000" fill="none"/><rect x="21" y="6" width="12" height="12" fill="#e01010"/><circle cx="27" cy="12" r="3.500" fill="#c4c4c4"/></svg></div>
<div class="b gy" style="left:1323px;top:366px"><svg viewBox="0 0 38 38"><use href="#fr"/><path d="M8 19H30" stroke="#e01010" stroke-width="3"/><path d="M14 19H24" stroke="#0a28e0" stroke-width="3"/></svg></div>
<div class="b gy" style="left:1363px;top:366px"><svg viewBox="0 0 38 38"><use href="#fr"/><path d="M8 6V32M30 6V32" stroke="#000"/><path d="M9 19H29M9 19L12 17M9 19L12 21M29 19L26 17M29 19L26 21" stroke="#0a40e0" fill="none"/><rect x="15" y="14" width="8" height="10" fill="#c4c4c4" stroke="#0a40e0"/><text x="19" y="22.500" text-anchor="middle" font-family="Liberation Sans" font-size="8" fill="#0a28e0">4</text></svg></div>
<div class="b gy" style="left:1403px;top:366px"><svg viewBox="0 0 38 38"><use href="#fr"/><path d="M8 8H22V16H31V30H11V24H8Z" fill="#0a28d8"/><circle cx="14" cy="14" r="4" fill="#c4c4c4"/><circle cx="24" cy="24" r="4.500" fill="#c4c4c4"/></svg></div>

<div class="b gy" style="left:1283px;top:406px"><svg viewBox="0 0 38 38"><use href="#fr"/><path d="M8 27L21 13L30 27Z" fill="none" stroke="#e01010" stroke-width="2.500"/><path d="M8 27H30" stroke="#0a28e0" stroke-width="3"/><path d="M19 24V19M19 18L17 21H21Z" stroke="#000" stroke-width=".6"/></svg></div>
<div class="b gy" style="left:1323px;top:406px"><svg viewBox="0 0 38 38"><use href="#fr"/><path d="M7 32L19 6L31 32" fill="none" stroke="#e01010" stroke-width="2.500"/><path d="M7 32L19 22L31 32" fill="none" stroke="#0a28e0" stroke-width="2.500"/><path d="M19 20V14M19 13L17 16H21Z" stroke="#000" stroke-width=".6"/></svg></div>
<div class="b gy" style="left:1363px;top:406px"><svg viewBox="0 0 38 38"><use href="#fr"/><path d="M8 25L14 9H24L30 25" fill="none" stroke="#e01010" stroke-width="3.500"/><path d="M5 32L9 25H29L33 32" fill="none" stroke="#0a28e0" stroke-width="3.500"/><path d="M19 21V15M19 14L17 17H21Z" stroke="#000" stroke-width=".6"/></svg></div>
<div class="b gy" style="left:1403px;top:406px"><svg viewBox="0 0 38 38"><use href="#fr"/><path d="M10 25L16 9H24L30 25" fill="none" stroke="#e01010" stroke-width="3.500"/><path d="M5 25H33" stroke="#0a28e0" stroke-width="3"/><path d="M5 22L10 28M10 22L5 28M28 22L33 28M33 22L28 28" stroke="#000"/><path d="M19 21V15M19 14L17 17H21Z" stroke="#000" stroke-width=".6"/></svg></div>

<div class="b or" style="left:1283px;top:446px"><svg viewBox="0 0 38 38"><use href="#fr"/><path d="M13 9L25 18L21 19L27 28L23 30L18 21L15 24Z"/></svg></div>
<div class="b or" style="left:1323px;top:446px"><svg viewBox="0 0 38 38"><use href="#fr"/><rect x="8" y="8" width="22" height="22" fill="none" stroke="#e01010" stroke-width="2.500"/><path d="M14 11L25 19L21 20L26 28L23 30L18 22L15 25Z"/></svg></div>
<div class="b or" style="left:1363px;top:446px"><svg viewBox="0 0 38 38"><use href="#fr"/><path d="M14 8H30V30H14L8 24V14Z" fill="none" stroke="#e01010" stroke-width="2.500"/><path d="M14 11L25 19L21 20L26 28L23 30L18 22L15 25Z"/></svg></div>
<div class="b or" style="left:1403px;top:446px"><svg viewBox="0 0 38 38"><use href="#fr"/><path d="M10 8V28M10 24H16V14H24V10H28" fill="none" stroke="#000"/><circle cx="10" cy="21" r="2.500" fill="#e01010"/><circle cx="10" cy="29" r="2.500" fill="#30e040"/><circle cx="28" cy="10" r="2.500" fill="#30e040"/><path d="M19 16L29 25L26 26L30 32L27 33L23 27L20 29Z"/></svg></div>

<!-- right bottom -->
<div style="left:1282px;top:489px;width:158px;height:250px;background:#000;border-left:1px solid #3a7a6a"></div>
<div style="left:1282px;top:545px;width:158px;height:137px;background:#fb0000;border-top:1px solid #a06020;border-bottom:1px solid #a06020"></div>
<div style="left:1288px;top:552px;width:147px;height:116px;border:2px solid;border-color:#909090 #909090 #40d0d0 #40d0d0"></div>
<svg style="left:1285px;top:662px" width="10" height="10"><path d="M1 1L9 9M9 1L1 9" stroke="#60e0e0"/></svg>
<div style="left:1282px;top:738px;width:158px;height:45px;background:#52c8a8;border-top:2px solid #2f7a6a;border-left:1px solid #2f7a6a"></div>
<div style="left:1285px;top:746px;font:bold 13px/15px 'Liberation Mono',monospace;letter-spacing:1.100px;white-space:pre">X = 3.629808"
Y = 8.032247"</div>

<!-- Popview 1 -->
<div style="left:611px;top:167px;width:615px;height:322px;background:#c4c4c4;border:1px solid;border-color:#f0f0f0 #666 #666 #f0f0f0"></div>
<div style="left:615px;top:171px;width:607px;height:18px;background:linear-gradient(90deg,#808080,#c4c4c4)"></div>
<div style="left:617px;top:173px;width:15px;height:15px;background:#fff;border:1px solid #000;border-top:3px solid #223a80"></div>
<svg style="left:619px;top:176px" width="11" height="11"><rect width="11" height="11" fill="#e8e860"/><path d="M1 1L10 10M10 1L1 10" stroke="#2a7a2a" stroke-width="2"/></svg>
<div style="left:634px;top:172px;font:bold 11px/16px 'Liberation Mono',monospace;letter-spacing:.4px;color:#d4d4d4;white-space:pre">Popview - 1</div>
<div class="x" style="left:1205px;top:172px;width:16px;height:15px"><svg width="14" height="13"><path d="M3 2L11 11M11 2L3 11" stroke="#000" stroke-width="1.600"/></svg></div>
<div style="left:615px;top:189px;width:607px;height:296px;background:#52c3a5;border-top:2px solid #2f6a5c"></div>
<div style="left:615px;top:191px;width:572px;height:266px;background:#a8ddd4"></div>
<svg style="left:618px;top:192px" width="566" height="263" viewBox="618 192 566 263">
<defs><clipPath id="p1a"><rect x="618" y="192" width="566" height="83"/></clipPath><clipPath id="p1b"><rect x="618" y="275" width="566" height="180"/></clipPath></defs>
<rect x="618" y="192" width="566" height="263" fill="#000"/>
<rect x="618" y="275" width="566" height="180" fill="#0a14f0"/>
<circle cx="743" cy="204" r="22" fill="#0a28e0"/><ellipse cx="743" cy="204" rx="11" ry="12" fill="#fde0c8"/>
<circle cx="991" cy="204" r="22" fill="#0a28e0"/><ellipse cx="991" cy="204" rx="11" ry="12" fill="#fde0c8"/>
<g fill="none" stroke-width="2"><g clip-path="url(#p1a)" stroke="#b8902a"><circle cx="743" cy="257" r="123"/><circle cx="991" cy="257" r="123"/></g><g clip-path="url(#p1b)" stroke="#a8a8e0"><circle cx="743" cy="257" r="123"/><circle cx="991" cy="257" r="123"/></g></g>
<path d="M732 262H754M743 251V273M980 262H1002M991 251V273" stroke="#e81010" stroke-width="2"/>
<path d="M733 364H753M743 354V374M981 364H1001M991 354V374" stroke="#3090f0" stroke-width="2"/>
<g fill="#fde0c8"><circle cx="744" cy="311" r="11"/><circle cx="991" cy="311" r="11"/>
<circle cx="636" cy="408" r="3.500"/><circle cx="679" cy="409" r="3.500"/><circle cx="727" cy="409" r="3.500"/><circle cx="761" cy="411" r="3.500"/><circle cx="797" cy="412" r="3.500"/><circle cx="839" cy="411" r="3.500"/><circle cx="881" cy="408" r="3.500"/><circle cx="919" cy="409" r="3.500"/><circle cx="960" cy="408" r="3.500"/><circle cx="1010" cy="408" r="3.500"/><circle cx="1052" cy="408" r="3.500"/><circle cx="1100" cy="408" r="3.500"/><circle cx="1138" cy="408" r="3.500"/></g>
</svg>
<div style="left:1187px;top:189px;width:37px;height:248px;background:#000"></div>
<div class="p" style="left:1188px;top:191px"><svg viewBox="0 0 38 38"><use href="#pp"/></svg></div>
<div class="p" style="left:1188px;top:226px"><svg viewBox="0 0 38 38"><use href="#up"/></svg></div>
<div class="p" style="left:1188px;top:261px"><svg viewBox="0 0 38 38"><use href="#dn"/></svg></div>
<div class="p" style="left:1188px;top:296px"><svg viewBox="0 0 38 38"><use href="#lf"/></svg></div>
<div class="p" style="left:1188px;top:331px"><svg viewBox="0 0 38 38"><use href="#rt"/></svg></div>
<div class="p" style="left:1188px;top:366px"><svg viewBox="0 0 38 38"><use href="#fit"/></svg></div>
<div class="p" style="left:1188px;top:401px"><svg viewBox="0 0 38 38"><use href="#zm"/></svg></div>
<div style="left:615px;top:456px;width:607px;height:2px;background:#000"></div>
<div class="cl" style="left:617px;top:459px;width:604px;height:26px">Close</div>

<!-- Popview 2 -->
<div style="left:763px;top:547px;width:458px;height:302px;background:#c4c4c4;border:1px solid;border-color:#f0f0f0 #666 #666 #f0f0f0"></div>
<div style="left:766px;top:551px;width:451px;height:18px;background:linear-gradient(90deg,#24407c,#a8c0e4)"></div>
<div style="left:767px;top:553px;width:15px;height:15px;background:#fff;border:1px solid #000;border-top:3px solid #223a80"></div>
<svg style="left:769px;top:556px" width="11" height="11"><rect width="11" height="11" fill="#e8e860"/><path d="M1 1L10 10M10 1L1 10" stroke="#2a7a2a" stroke-width="2"/></svg>
<div style="left:785px;top:552px;font:bold 11px/16px 'Liberation Mono',monospace;letter-spacing:.4px;color:#fff;white-space:pre">Popview - 2</div>
<div class="x" style="left:1200px;top:552px;width:16px;height:15px"><svg width="14" height="13"><path d="M3 2L11 11M11 2L3 11" stroke="#000" stroke-width="1.600"/></svg></div>
<div style="left:766px;top:569px;width:451px;height:277px;background:#52c3a5;border-top:2px solid #2f6a5c"></div>
<div style="left:766px;top:571px;width:416px;height:244px;background:#a8ddd4"></div>
<svg style="left:768px;top:573px" width="409" height="240" viewBox="768 573 409 240">
<defs><clipPath id="p2a"><rect x="768" y="573" width="409" height="117"/></clipPath><clipPath id="p2b"><rect x="768" y="690" width="409" height="123"/></clipPath>
<g id="sp2"><circle r="6" fill="#0a28e0"/><circle r="3" fill="#fde0c8"/></g>
<g id="bp2"><circle r="17" fill="#0a28e0"/><circle r="8" fill="#fde0c8"/></g></defs>
<rect x="768" y="573" width="409" height="240" fill="#000"/>
<rect x="768" y="573" width="409" height="117" fill="#0a14f0"/>
<path d="M770 775H908M783 781H900M795 787H887M810 793H877M1017 776H1147M1025 782H1138M1035 788H1128M1050 794H1113" stroke="#b8902a" stroke-width="2"/>
<g fill="none" stroke-width="2"><g clip-path="url(#p2a)" stroke="#a8a8e0"><circle cx="842" cy="698" r="101"/><circle cx="1081" cy="698" r="101"/></g><g clip-path="url(#p2b)" stroke="#b8902a"><circle cx="842" cy="698" r="101"/><circle cx="1081" cy="698" r="101"/></g></g>
<path d="M832 610H850M841 602V618M1072 611H1090M1081 603V619" stroke="#3090f0" stroke-width="1.500"/>
<path d="M837 701H853M845 693V709M1077 702H1093M1085 694V710" stroke="#e81010" stroke-width="2"/>
<circle cx="842" cy="654" r="8" fill="#fde0c8"/><circle cx="1082" cy="655" r="8" fill="#fde0c8"/>
<use href="#bp2" x="842" y="743"/><use href="#bp2" x="1082" y="744"/>
<use href="#sp2" x="778" y="715"/><use href="#sp2" x="818" y="714"/><use href="#sp2" x="882" y="722"/><use href="#sp2" x="897" y="723"/><use href="#sp2" x="928" y="723"/><use href="#sp2" x="956" y="722"/><use href="#sp2" x="981" y="722"/><use href="#sp2" x="1004" y="722"/><use href="#sp2" x="1028" y="723"/><use href="#sp2" x="1059" y="722"/><use href="#sp2" x="1078" y="723"/><use href="#sp2" x="1095" y="724"/><use href="#sp2" x="775" y="750"/><use href="#sp2" x="774" y="765"/><use href="#sp2" x="775" y="796"/><use href="#sp2" x="1160" y="799"/><use href="#sp2" x="1160" y="816"/>
</svg>
<div style="left:1182px;top:569px;width:36px;height:246px;background:#000"></div>
<div class="p" style="left:1183px;top:572px"><svg viewBox="0 0 38 38"><use href="#pp"/></svg></div>
<div class="p" style="left:1183px;top:607px"><svg viewBox="0 0 38 38"><use href="#up"/></svg></div>
<div class="p" style="left:1183px;top:642px"><svg viewBox="0 0 38 38"><use href="#dn"/></svg></div>
<div class="p" style="left:1183px;top:677px"><svg viewBox="0 0 38 38"><use href="#lf"/></svg></div>
<div class="p" style="left:1183px;top:712px"><svg viewBox="0 0 38 38"><use href="#rt"/></svg></div>
<div class="p" style="left:1183px;top:747px"><svg viewBox="0 0 38 38"><use href="#fit"/></svg></div>
<div class="p" style="left:1183px;top:782px"><svg viewBox="0 0 38 38"><use href="#zm"/></svg></div>
<div class="cl" style="left:766px;top:818px;width:451px;height:27px;line-height:23px">Close</div>
</body></html>
